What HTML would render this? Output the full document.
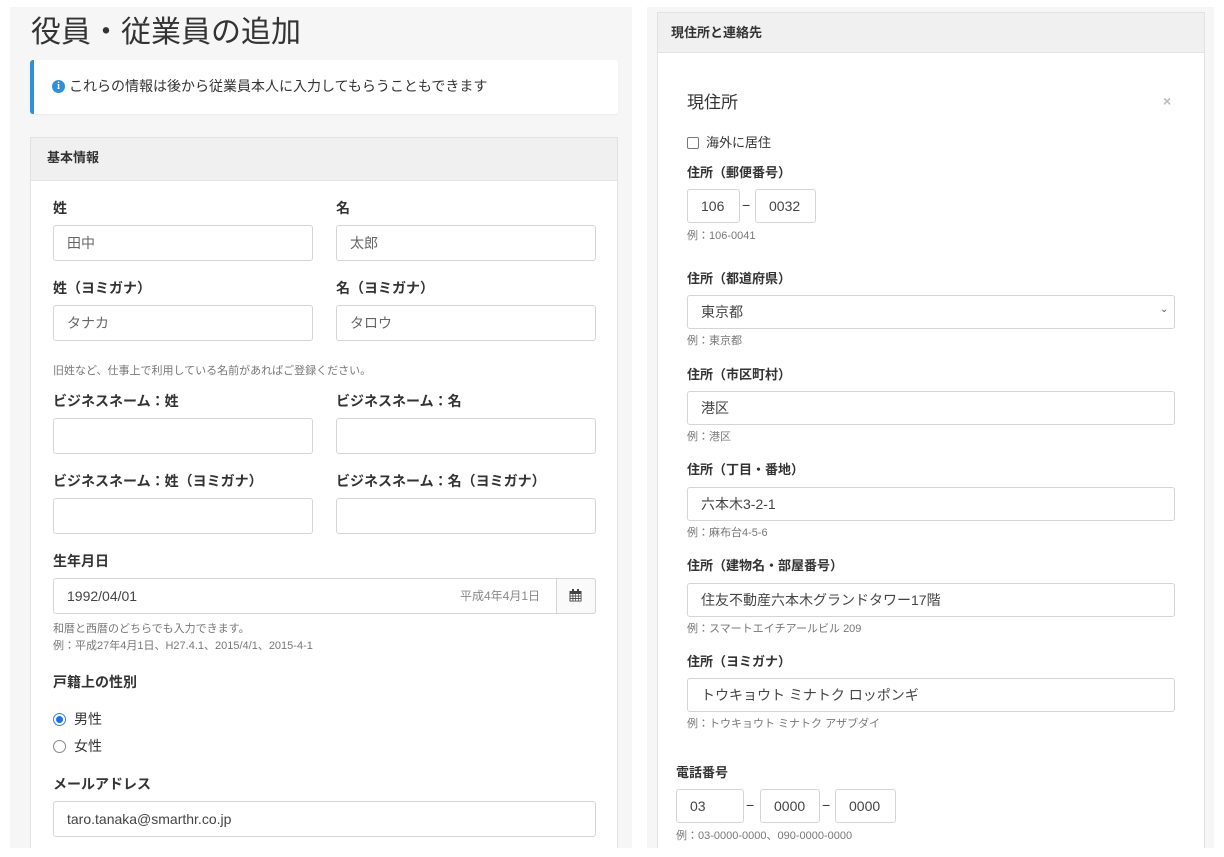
<!DOCTYPE html>
<html><head><meta charset="utf-8"><style>
*{box-sizing:border-box;margin:0;padding:0}
body{width:1224px;height:857px;background:#fff;position:relative;overflow:hidden;font-family:"Liberation Sans","Noto Sans CJK JP",sans-serif;color:#333}
div,span{position:absolute}
.gp{background:#f6f6f6}
.card{background:#fff;border:1px solid #e2e2e2}
.hd{background:#f0f0f0;border-bottom:1px solid #e2e2e2}
.l{font-size:14px;font-weight:bold;line-height:16px;white-space:nowrap;color:#333}
.in{border:1px solid #d5d5d5;border-radius:3px;background:#fff;font-size:14px;color:#444;padding-left:13px;white-space:nowrap}
.h{font-size:11px;color:#777;line-height:12px;white-space:nowrap}
.t{white-space:nowrap}
</style></head><body>
<div class="gp" style="left:10px;top:7px;width:622px;height:841px"></div>
<div class="gp" style="left:647px;top:7px;width:567px;height:841px"></div>

<div class="t" style="left:31px;top:16px;font-size:30px;line-height:34px;color:#333">役員・従業員の追加</div>
<div style="left:30px;top:60px;width:588px;height:54px;background:#fff;border-left:4px solid #2f8fd8;border-radius:3px;box-shadow:0 1px 2px rgba(0,0,0,.05)"></div>
<div style="left:52px;top:80px;width:13px;height:13px;border-radius:50%;background:#2f8fd8;color:#fff;font-size:10px;font-weight:bold;line-height:13px;text-align:center;font-family:'Liberation Serif',serif">i</div>
<div class="t" style="left:69px;top:78px;font-size:14px;line-height:16px">これらの情報は後から従業員本人に入力してもらうこともできます</div>

<div class="card" style="left:30px;top:137px;width:588px;height:720px"></div>
<div class="hd" style="left:31px;top:138px;width:586px;height:43px"></div>
<div class="l" style="left:47px;top:150px;font-size:13px">基本情報</div>

<div class="l" style="left:53px;top:200px">姓</div>
<div class="l" style="left:336px;top:200px">名</div>
<div class="in" style="left:53px;top:225px;width:260px;height:36px;line-height:34px;color:#666">田中</div>
<div class="in" style="left:336px;top:225px;width:260px;height:36px;line-height:34px;color:#666">太郎</div>
<div class="l" style="left:53px;top:280px">姓（ヨミガナ）</div>
<div class="l" style="left:336px;top:280px">名（ヨミガナ）</div>
<div class="in" style="left:53px;top:305px;width:260px;height:36px;line-height:34px;color:#666">タナカ</div>
<div class="in" style="left:336px;top:305px;width:260px;height:36px;line-height:34px;color:#666">タロウ</div>
<div class="h" style="left:53px;top:365px">旧姓など、仕事上で利用している名前があればご登録ください。</div>
<div class="l" style="left:53px;top:393px">ビジネスネーム：姓</div>
<div class="l" style="left:336px;top:393px">ビジネスネーム：名</div>
<div class="in" style="left:53px;top:418px;width:260px;height:36px"></div>
<div class="in" style="left:336px;top:418px;width:260px;height:36px"></div>
<div class="l" style="left:53px;top:473px">ビジネスネーム：姓（ヨミガナ）</div>
<div class="l" style="left:336px;top:473px">ビジネスネーム：名（ヨミガナ）</div>
<div class="in" style="left:53px;top:498px;width:260px;height:36px"></div>
<div class="in" style="left:336px;top:498px;width:260px;height:36px"></div>
<div class="l" style="left:53px;top:553px">生年月日</div>
<div class="in" style="left:53px;top:578px;width:543px;height:36px;line-height:34px">1992/04/01</div>
<div class="t" style="left:460px;top:588px;font-size:12px;color:#888;line-height:16px">平成4年4月1日</div>
<div style="left:556px;top:578px;width:40px;height:36px;border:1px solid #d5d5d5;border-radius:0 3px 3px 0;background:#fafafa"></div>
<svg style="position:absolute;left:569px;top:589px" width="13" height="13" viewBox="0 0 13 13"><rect x="0.5" y="2" width="12" height="10.5" fill="#444"/><rect x="3" y="0" width="2" height="3" fill="#444"/><rect x="8" y="0" width="2" height="3" fill="#444"/><g fill="#fff"><rect x="1.5" y="5" width="2" height="1.6"/><rect x="4.3" y="5" width="2" height="1.6"/><rect x="7" y="5" width="2" height="1.6"/><rect x="9.7" y="5" width="2" height="1.6"/><rect x="1.5" y="7.5" width="2" height="1.6"/><rect x="4.3" y="7.5" width="2" height="1.6"/><rect x="7" y="7.5" width="2" height="1.6"/><rect x="9.7" y="7.5" width="2" height="1.6"/><rect x="1.5" y="10" width="2" height="1.6"/><rect x="4.3" y="10" width="2" height="1.6"/><rect x="7" y="10" width="2" height="1.6"/><rect x="9.7" y="10" width="2" height="1.6"/></g></svg>
<div class="h" style="left:53px;top:623px">和暦と西暦のどちらでも入力できます。</div>
<div class="h" style="left:53px;top:640px">例：平成27年4月1日、H27.4.1、2015/4/1、2015-4-1</div>
<div class="l" style="left:53px;top:674px">戸籍上の性別</div>
<div style="left:53px;top:713px;width:13px;height:13px;border-radius:50%;border:1px solid #2f7fe8;background:#fff"></div>
<div style="left:56px;top:716px;width:7px;height:7px;border-radius:50%;background:#1f6fe5"></div>
<div class="t" style="left:74px;top:711px;font-size:14px;line-height:16px">男性</div>
<div style="left:53px;top:740px;width:13px;height:13px;border-radius:50%;border:1px solid #888;background:#fff"></div>
<div class="t" style="left:74px;top:738px;font-size:14px;line-height:16px">女性</div>
<div class="l" style="left:53px;top:776px">メールアドレス</div>
<div class="in" style="left:53px;top:801px;width:543px;height:36px;line-height:34px">taro.tanaka@smarthr.co.jp</div>
<div style="left:0;top:848px;width:640px;height:9px;background:#fff"></div>

<div class="card" style="left:657px;top:12px;width:548px;height:845px"></div>
<div class="hd" style="left:658px;top:13px;width:546px;height:40px"></div>
<div class="l" style="left:671px;top:25px;font-size:13px">現住所と連絡先</div>
<div class="t" style="left:687px;top:93px;font-size:17px;line-height:20px">現住所</div>
<div class="t" style="left:1163px;top:93px;font-size:14px;color:#bbb;font-weight:bold">×</div>
<div style="left:687px;top:137px;width:12px;height:12px;border:1px solid #777;border-radius:2px;background:#fff"></div>
<div class="t" style="left:706px;top:135px;font-size:13px;line-height:16px">海外に居住</div>
<div class="l" style="left:687px;top:165px;font-size:13px">住所（郵便番号）</div>
<div class="in" style="left:687px;top:189px;width:53px;height:34px;line-height:32px">106</div>
<div class="t" style="left:742px;top:197px;font-size:14px;line-height:16px">−</div>
<div class="in" style="left:755px;top:189px;width:61px;height:34px;line-height:32px">0032</div>
<div class="h" style="left:687px;top:230px">例：106-0041</div>
<div class="l" style="left:687px;top:271px;font-size:13px">住所（都道府県）</div>
<div class="in" style="left:687px;top:295px;width:488px;height:34px;line-height:32px">東京都</div>
<div class="t" style="left:1160px;top:304px;font-size:10px;color:#555">&#8964;</div>
<div class="h" style="left:687px;top:335px">例：東京都</div>
<div class="l" style="left:687px;top:367px;font-size:13px">住所（市区町村）</div>
<div class="in" style="left:687px;top:391px;width:488px;height:34px;line-height:32px">港区</div>
<div class="h" style="left:687px;top:431px">例：港区</div>
<div class="l" style="left:687px;top:462px;font-size:13px">住所（丁目・番地）</div>
<div class="in" style="left:687px;top:487px;width:488px;height:34px;line-height:32px">六本木3-2-1</div>
<div class="h" style="left:687px;top:527px">例：麻布台4-5-6</div>
<div class="l" style="left:687px;top:558px;font-size:13px">住所（建物名・部屋番号）</div>
<div class="in" style="left:687px;top:583px;width:488px;height:34px;line-height:32px">住友不動産六本木グランドタワー17階</div>
<div class="h" style="left:687px;top:623px">例：スマートエイチアールビル 209</div>
<div class="l" style="left:687px;top:654px;font-size:13px">住所（ヨミガナ）</div>
<div class="in" style="left:687px;top:678px;width:488px;height:34px;line-height:32px">トウキョウト ミナトク ロッポンギ</div>
<div class="h" style="left:687px;top:718px">例：トウキョウト ミナトク アザブダイ</div>
<div class="l" style="left:676px;top:765px;font-size:13px">電話番号</div>
<div class="in" style="left:676px;top:789px;width:68px;height:34px;line-height:32px">03</div>
<div class="t" style="left:746px;top:797px;font-size:14px;line-height:16px">−</div>
<div class="in" style="left:760px;top:789px;width:60px;height:34px;line-height:32px">0000</div>
<div class="t" style="left:822px;top:797px;font-size:14px;line-height:16px">−</div>
<div class="in" style="left:835px;top:789px;width:61px;height:34px;line-height:32px">0000</div>
<div class="h" style="left:676px;top:830px">例：03-0000-0000、090-0000-0000</div>
<div style="left:640px;top:848px;width:584px;height:9px;background:#fff"></div>
</body></html>
